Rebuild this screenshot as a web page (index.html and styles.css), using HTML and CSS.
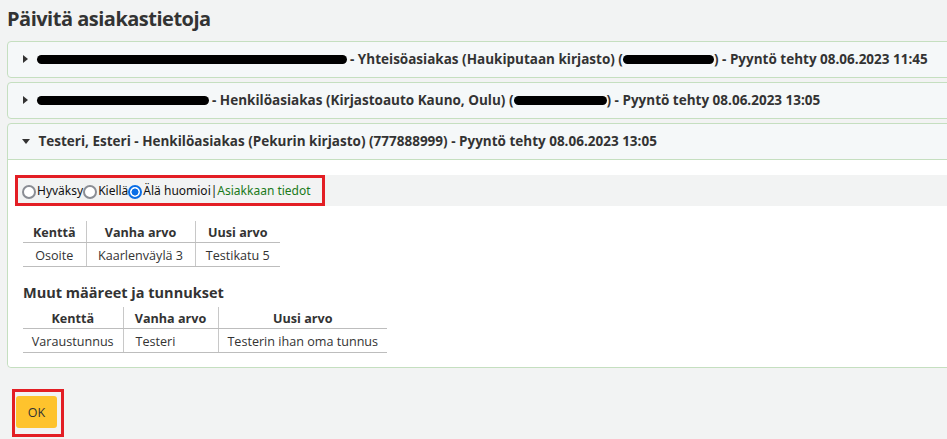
FILE: index.html
```html
<!DOCTYPE html>
<html lang="fi">
<head>
<meta charset="utf-8">
<title>Päivitä asiakastietoja</title>
<link rel="stylesheet" href="styles.css">
</head>
<body>
<h1 class="title">Päivitä asiakastietoja</h1>
<div class="accordion">
  <div class="panel">
    <div class="panel-head">
      <span class="caret closed"></span>
      <span class="redact" style="width:310px"></span> - Yhteisöasiakas (Haukiputaan kirjasto) (<span class="redact" style="width:91px"></span>) - Pyyntö tehty 08.06.2023 11:45
    </div>
  </div>
  <div class="panel">
    <div class="panel-head">
      <span class="caret closed"></span>
      <span class="redact" style="width:172px"></span> - Henkilöasiakas (Kirjastoauto Kauno, Oulu) (<span class="redact" style="width:93px"></span>) - Pyyntö tehty 08.06.2023 13:05
    </div>
  </div>
  <div class="panel open">
    <div class="panel-head">
      <span class="caret opened"></span>
      Testeri, Esteri - Henkilöasiakas (Pekurin kirjasto) (777888999) - Pyyntö tehty 08.06.2023 13:05
    </div>
    <div class="panel-body">
      <div class="choice-row">
        <div class="choice-box">
          <label class="radio"><span class="dot"></span>Hyväksy</label>
          <label class="radio"><span class="dot"></span>Kiellä</label>
          <label class="radio"><span class="dot checked"></span>Älä huomioi</label>
          <span class="sep">|</span><span class="link">Asiakkaan tiedot</span>
        </div>
      </div>
      <table class="diff t1">
        <colgroup><col class="c1"><col class="c2"><col class="c3"></colgroup>
        <thead><tr><th>Kenttä</th><th>Vanha arvo</th><th>Uusi arvo</th></tr></thead>
        <tbody><tr><td>Osoite</td><td>Kaarlenväylä 3</td><td>Testikatu 5</td></tr></tbody>
      </table>
      <h4 class="subhead">Muut määreet ja tunnukset</h4>
      <table class="diff t2">
        <colgroup><col class="c1"><col class="c2"><col class="c3"></colgroup>
        <thead><tr><th>Kenttä</th><th>Vanha arvo</th><th>Uusi arvo</th></tr></thead>
        <tbody><tr><td>Varaustunnus</td><td class="left">Testeri</td><td>Testerin ihan oma tunnus</td></tr></tbody>
      </table>
    </div>
  </div>
</div>
<div class="actions">
  <div class="ok-frame"><button class="ok">OK</button></div>
</div>
</body>
</html>
```
FILE: styles.css
```css
html, body {
  margin: 0;
  padding: 0;
  overflow: hidden;
}
body {
  background: #f2f3f3;
  color: #333;
  font-family: "Open Sans", "Noto Sans", sans-serif;
  font-size: 13px;
  padding-left: 7px;
}
.title {
  margin: 0;
  padding-top: 6px;
  height: 35px;
  font-size: 20px;
  font-weight: 700;
  letter-spacing: -0.5px;
  color: #333;
  line-height: 26px;
}
.accordion {
  margin-right: -30px;
  display: flex;
  flex-direction: column;
  gap: 4px;
}
.panel {
  border: 1px solid #c5dfc0;
  border-radius: 4px;
  background: #f5f8f9;
}
.panel-head {
  height: 35px;
  line-height: 35px;
  padding-left: 14px;
  font-weight: 700;
  font-size: 13.5px;
  color: #333;
  white-space: nowrap;
}
.panel.open .panel-head {
  border-bottom: 1px solid #c5dfc0;
}
.caret {
  display: inline-block;
  width: 0;
  height: 0;
  margin-right: 5px;
  vertical-align: middle;
  position: relative;
  top: -1px;
}
.caret.closed {
  border-top: 4px solid transparent;
  border-bottom: 4px solid transparent;
  border-left: 5px solid #333;
  margin-left: 1px;
}
.caret.opened {
  border-left: 4px solid transparent;
  border-right: 4px solid transparent;
  border-top: 5px solid #333;
}
.redact {
  display: inline-block;
  height: 9px;
  background: #000;
  border-radius: 5px;
  vertical-align: middle;
  position: relative;
  top: -1px;
}
.panel-body {
  background: #fff;
  padding: 15px 0 14px 8px;
  border-radius: 0 0 4px 4px;
}
.choice-row {
  background: #f2f3f3;
  height: 31px;
  display: flex;
  align-items: stretch;
  margin-left: -1px;
}
.choice-box {
  border: 3px solid #e31e24;
  display: flex;
  align-items: center;
  padding: 0 11px 0 4px;
  font-family: "Noto Sans", sans-serif;
  font-size: 12px;
  color: #111;
  white-space: nowrap;
}
.radio {
  display: inline-flex;
  align-items: center;
}
.dot {
  width: 10px;
  height: 10px;
  border: 2px solid #8a8d94;
  border-radius: 50%;
  background: #fff;
  margin-right: 1px;
  position: relative;
  top: 1px;
}
.dot.checked {
  border-color: #0a6ee6;
  background: radial-gradient(circle, #0a6ee6 0 3.2px, #fff 3.8px);
}
.sep { color: #111; }
.link { color: #1a7a1a; }
.diff {
  border-collapse: collapse;
  table-layout: fixed;
  margin-left: 7px;
  font-size: 12.6px;
  color: #333;
}
.t1 { margin-top: 15px; }
.t1 .c1 { width: 63px; }
.t1 .c2 { width: 109px; }
.t1 .c3 { width: 85px; }
.t2 .c1 { width: 100px; }
.t2 .c2 { width: 95px; }
.t2 .c3 { width: 169px; }
.diff th, .diff td {
  padding: 0 4px;
  height: 22px;
  text-align: center;
  border-left: 1px solid #c8c8c8;
  border-bottom: 1px solid #bdbdbd;
  white-space: nowrap;
}
.diff td { height: 22px; padding-top: 1px; }
.diff th:first-child, .diff td:first-child { border-left: none; }
.diff th { font-weight: 700; height: 20px; padding-top: 1px; }
.diff td.left { text-align: left; padding-left: 12px; }
.subhead {
  margin: 16px 0 4px 7px;
  font-size: 14.5px;
  font-weight: 700;
  color: #333;
  line-height: 20px;
}
.actions {
  padding-top: 21px;
}
.ok-frame {
  display: inline-block;
  border: 3px solid #e31e24;
  padding: 4px 4px 6px 1px;
  margin-left: 5px;
}
.ok {
  display: block;
  width: 41px;
  height: 32px;
  background: #fec32d;
  border: none;
  border-radius: 3px;
  font-family: "Open Sans", sans-serif;
  font-size: 12.5px;
  color: #333;
  padding: 0;
}
```
